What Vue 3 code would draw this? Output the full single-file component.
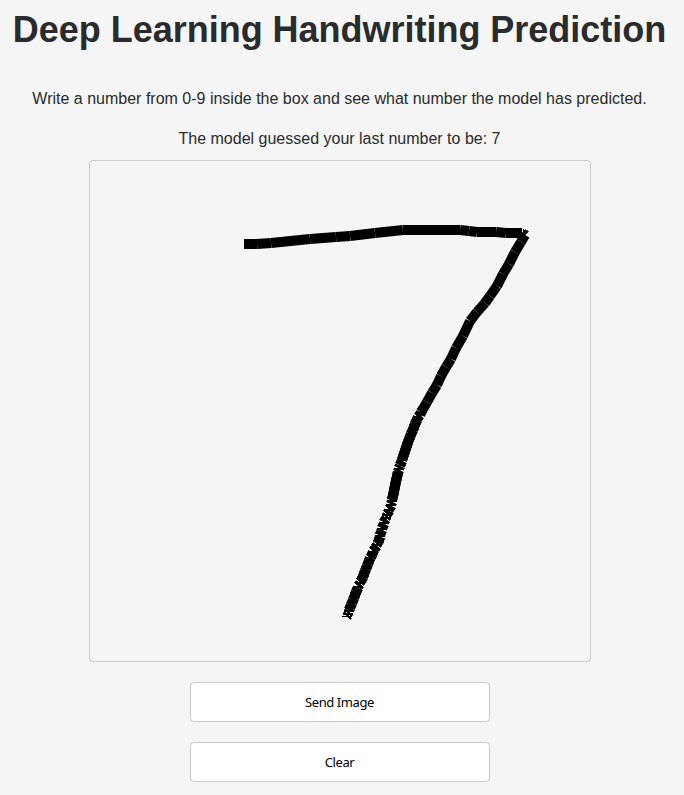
<script setup>
import { computed, ref } from 'vue'

const prediction = ref(7)

// Pointer samples, relative to the drawing area
const strokePoints = [
  [154, 83], [167, 83], [181, 82], [220, 78], [246, 76], [260, 75], [285, 72], [313, 69],
  [370, 69], [379, 70], [387, 71], [406, 71], [416, 72], [431, 72], [432, 72], [433, 73],
  [434, 73], [435, 74], [431, 81], [425, 91], [419, 103], [413, 113], [407, 125], [400, 135],
  [395, 142], [387, 151], [380, 160], [373, 175], [366, 187], [361, 198], [356, 206],
  [351, 215], [347, 224], [342, 232], [337, 241], [333, 248], [331, 251], [330, 254],
  [328, 256], [327, 259], [325, 263], [324, 266], [323, 269], [321, 273], [320, 276],
  [318, 281], [317, 284], [316, 287], [315, 290], [314, 293], [313, 296], [312, 299],
  [312, 300], [311, 302], [310, 304], [310, 305], [309, 307], [309, 309], [308, 311],
  [307, 316], [306, 320], [305, 325], [304, 330], [303, 335], [302, 339], [302, 341],
  [301, 343], [301, 345], [300, 347], [299, 348], [299, 350], [298, 352], [297, 353],
  [297, 355], [296, 356], [296, 358], [295, 359], [294, 361], [294, 363], [293, 365],
  [292, 367], [292, 369], [291, 371], [290, 374], [290, 376], [289, 379], [288, 382],
  [287, 383], [287, 385], [285, 387], [285, 388], [283, 390], [283, 391], [282, 394],
  [281, 396], [280, 397], [279, 400], [278, 403], [277, 405], [276, 408], [275, 410],
  [274, 413], [273, 416], [272, 418], [271, 420], [270, 421], [270, 423], [268, 425],
  [268, 427], [267, 429], [266, 431], [265, 434], [264, 437], [263, 439], [262, 442],
  [261, 444], [260, 447], [259, 449], [259, 451], [258, 452], [258, 454], [257, 455],
  [257, 456]
]
const segments = ref(strokePoints.slice(1).map((point, i) => [...strokePoints[i], ...point]))

// Short segments come from slow pointer movement and are inked repeatedly
const inked = computed(() => {
  const short = segments.value.filter(([x1, y1, x2, y2]) => Math.hypot(x2 - x1, y2 - y1) < 6)
  return [...segments.value, ...short, ...short]
})

function clearCanvas() {
  segments.value = []
}
</script>

<template>
  <main class="page">
    <h1 class="title">Deep Learning Handwriting Prediction</h1>
    <p class="text">Write a number from 0-9 inside the box and see what number the model has predicted.</p>
    <p class="text guess">The model guessed your last number to be: {{ prediction }}</p>
    <svg class="board" width="500" height="500" viewBox="0 0 500 500">
      <line v-for="(s, i) in inked" :key="i" :x1="s[0]" :y1="s[1]" :x2="s[2]" :y2="s[3]" />
    </svg>
    <button class="action" type="button">Send Image</button>
    <button class="action" type="button" @click="clearCanvas">Clear</button>
  </main>
</template>

<style>
body {
  margin: 0;
  background: #f5f5f5;
}
</style>

<style scoped>
.page {
  display: flex;
  flex-direction: column;
  align-items: center;
  width: 680px;
  height: 795px;
  overflow: hidden;
  color: #292b2c;
  font-family: "Liberation Sans", Arial, sans-serif;
}

.title {
  margin: 10px 0 39px;
  padding-right: 1px;
  font-size: 36px;
  line-height: 40px;
  font-weight: 700;
  letter-spacing: -0.02px;
  white-space: nowrap;
}

.text {
  margin: 0;
  padding-right: 1px;
  font-size: 16px;
  line-height: 20px;
}

.guess {
  margin: 20px 0 11px;
}

.board {
  flex: none;
  margin-bottom: 20px;
  border: 1px solid #ccc;
  border-radius: 4px;
}

.board line {
  stroke: #000;
  stroke-width: 10;
}

.action {
  flex: none;
  box-sizing: border-box;
  width: 300px;
  height: 40px;
  margin: 0 0 20px;
  padding: 0 1px 0 0;
  border: 1px solid #ccc;
  border-radius: 4px;
  background: #fff;
  color: #000;
  font-family: "Noto Sans", sans-serif;
  font-size: 13px;
  letter-spacing: -0.4px;
}
</style>
